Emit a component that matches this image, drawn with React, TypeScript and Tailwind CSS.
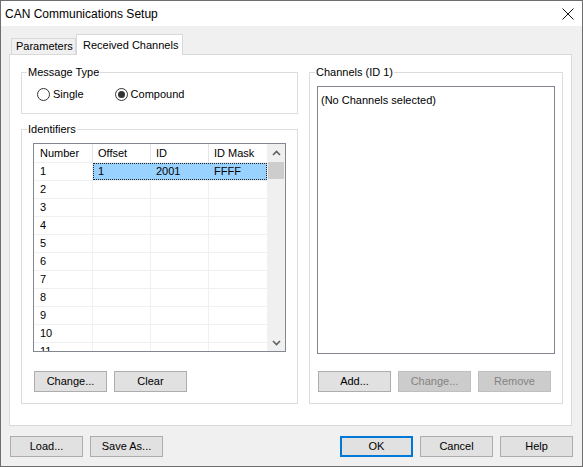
import React from "react";

const rows = [1, 2, 3, 4, 5, 6, 7, 8, 9, 10, 11];

function Btn({ label, disabled, primary, className = "" }: { label: string; disabled?: boolean; primary?: boolean; className?: string }) {
  const base = "w-[73px] h-[21px] flex items-center justify-center shrink-0";
  const look = disabled
    ? "bg-[#cccccc] border border-[#bfbfbf] text-[#838383]"
    : primary
    ? "bg-[#e1e1e1] border-2 border-[#0078d7] text-black"
    : "bg-[#e1e1e1] border border-[#adadad] text-black";
  return <div className={`${base} ${look} ${className}`}>{label}</div>;
}

function Radio({ checked }: { checked?: boolean }) {
  return (
    <div className="w-[13px] h-[13px] rounded-full border border-[#333333] bg-white flex items-center justify-center shrink-0">
      {checked && <div className="w-[7px] h-[7px] rounded-full bg-[#333333]" />}
    </div>
  );
}

function Chevron({ up }: { up?: boolean }) {
  return (
    <svg width="9" height="6" viewBox="0 0 9 6">
      <path d={up ? "M1 5 L4.5 1.5 L8 5" : "M1 1 L4.5 4.5 L8 1"} stroke="#606060" strokeWidth="1.6" fill="none" />
    </svg>
  );
}

export default function App() {
  return (
    <div className="w-[583px] h-[467px] border border-[#6e6e6e] bg-[#f0f0f0] flex flex-col font-['Liberation_Sans',Arial,sans-serif] text-[11px] text-black leading-none">
      {/* title bar */}
      <div className="h-[25px] bg-white flex items-center justify-between pl-[4px] pr-[8px] shrink-0">
        <span className="text-[12px]">CAN Communications Setup</span>
        <svg width="12" height="12" viewBox="0 0 12 12">
          <path d="M0.5 0.5 L11.5 11.5 M11.5 0.5 L0.5 11.5" stroke="#111" strokeWidth="1" />
        </svg>
      </div>

      <div className="flex-1 flex flex-col pl-[8px] pr-[10px] pt-[8px]">
        {/* tabs */}
        <div className="flex items-end h-[20px] pl-[2px]">
          <div className="w-[65px] h-[16px] pl-[4px] border border-b-0 border-[#d9d9d9] bg-[#f0f0f0] flex items-center">
            Parameters
          </div>
          <div className="w-[107px] h-[21px] -mb-[1px] relative z-10 pl-[6px] border border-b-0 border-[#d9d9d9] bg-white flex items-center">
            Received Channels
          </div>
        </div>

        {/* panel */}
        <div className="h-[372px] border border-[#d9d9d9] bg-white flex gap-[11px] pl-[11px] pt-[9px]">
          {/* left column */}
          <div className="w-[277px] flex flex-col">
            <fieldset className="h-[50px] border border-[#dcdcdc]">
              <legend className="ml-[5px] px-[1px] leading-[16px]">Message Type</legend>
              <div className="flex items-center mt-[8px] pl-[15px]">
                <Radio />
                <span className="ml-[3px]">Single</span>
                <div className="ml-[31px]">
                  <Radio checked />
                </div>
                <span className="ml-[3px]">Compound</span>
              </div>
            </fieldset>

            <fieldset className="h-[283px] mt-[7px] border border-[#dcdcdc]">
              <legend className="ml-[5px] px-[1px] leading-[16px]">Identifiers</legend>
              <div className="flex flex-col pl-[11px]">
                <div className="mt-[6px] w-[253px] h-[209px] border border-[#828790] flex overflow-hidden">
                  <div className="w-[233px] flex flex-col overflow-hidden">
                    <div className="h-[19px] flex shrink-0 border-b border-[#f0f0f0]">
                      <div className="w-[59px] pl-[6px] flex items-center border-r border-[#e5e5e5]">Number</div>
                      <div className="w-[58px] pl-[5px] flex items-center border-r border-[#e5e5e5]">Offset</div>
                      <div className="w-[58px] pl-[5px] flex items-center border-r border-[#e5e5e5]">ID</div>
                      <div className="w-[58px] pl-[5px] flex items-center">ID Mask</div>
                    </div>
                    {rows.map((r) => (
                      <div key={r} className="h-[18px] flex shrink-0 border-b border-[#f0f0f0]">
                        <div className="w-[59px] pl-[6px] flex items-center border-r border-[#f0f0f0]">{r}</div>
                        {r === 1 ? (
                          <div className="w-[174px] flex bg-[#99d1ff] border border-dotted border-[#222]">
                            <div className="w-[57px] pl-[4px] flex items-center">1</div>
                            <div className="w-[58px] pl-[5px] flex items-center">2001</div>
                            <div className="w-[57px] pl-[5px] flex items-center">FFFF</div>
                          </div>
                        ) : (
                          <>
                            <div className="w-[58px] border-r border-[#f0f0f0]" />
                            <div className="w-[58px] border-r border-[#f0f0f0]" />
                            <div className="w-[58px]" />
                          </>
                        )}
                      </div>
                    ))}
                  </div>
                  <div className="w-[18px] bg-[#f0f0f0] flex flex-col items-center">
                    <div className="h-[18px] flex items-center justify-center">
                      <Chevron up />
                    </div>
                    <div className="w-[16px] h-[17px] bg-[#cdcdcd]" />
                    <div className="flex-1" />
                    <div className="h-[17px] flex items-center justify-center">
                      <Chevron />
                    </div>
                  </div>
                </div>
                <div className="flex gap-[7px] mt-[19px] pl-[1px]">
                  <Btn label="Change..." />
                  <Btn label="Clear" />
                </div>
              </div>
            </fieldset>
          </div>

          {/* right column */}
          <fieldset className="w-[254px] h-[340px] border border-[#dcdcdc]">
            <legend className="ml-[5px] px-[1px] leading-[16px]">Channels (ID 1)</legend>
            <div className="flex flex-col pl-[7px]">
              <div className="mt-[6px] w-[238px] h-[268px] border border-[#828790] pl-[3px] pt-[8px]">
                (No Channels selected)
              </div>
              <div className="flex gap-[7px] mt-[17px] pl-[1px]">
                <Btn label="Add..." />
                <Btn label="Change..." disabled />
                <Btn label="Remove" disabled />
              </div>
            </div>
          </fieldset>
        </div>

        {/* bottom buttons */}
        <div className="flex mt-[10px] pl-[1px]">
          <Btn label="Load..." />
          <Btn label="Save As..." className="ml-[7px]" />
          <Btn label="OK" primary className="ml-[177px]" />
          <Btn label="Cancel" className="ml-[7px]" />
          <Btn label="Help" className="ml-[7px]" />
        </div>
      </div>
    </div>
  );
}
